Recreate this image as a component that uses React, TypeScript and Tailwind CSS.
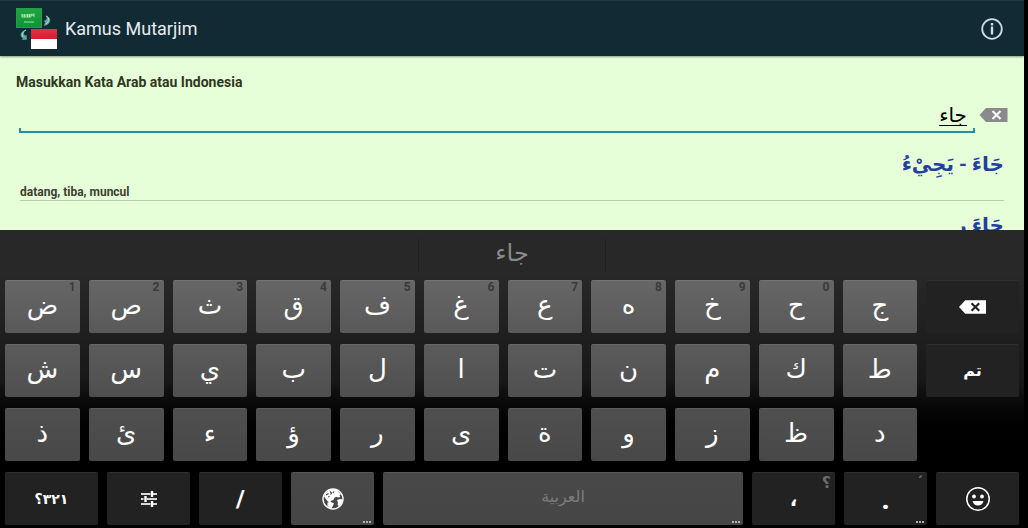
import { clsx } from "clsx";
import type { ReactNode } from "react";

const ROWS = [
  {
    tone: "border-[#727272] from-[#666666] to-[#595959]",
    keys: ["ض", "ص", "ث", "ق", "ف", "غ", "ع", "ه", "خ", "ح", "ج"],
    hints: ["1", "2", "3", "4", "5", "6", "7", "8", "9", "0"],
  },
  {
    tone: "border-[#676767] from-[#5b5b5b] to-[#4f4f4f]",
    keys: ["ش", "س", "ي", "ب", "ل", "ا", "ت", "ن", "م", "ك", "ط"],
    hints: [],
  },
  {
    tone: "border-[#5c5c5c] from-[#4f4f4f] to-[#484848]",
    keys: ["ذ", "ئ", "ء", "ؤ", "ر", "ى", "ة", "و", "ز", "ظ", "د"],
    hints: [],
  },
];

const DARK = "border-[#303030] from-[#222222] to-[#222222]";
const LIGHT = "border-[#585858] from-[#484848] to-[#464646]";

interface KeyProps {
  children: ReactNode;
  className: string;
  label?: string;
  hint?: string;
  hintClass?: string;
  more?: boolean;
}

function Key({
  children,
  className,
  label,
  hint,
  hintClass = "text-xs leading-3 font-bold text-[#3a3a3a]",
  more,
}: KeyProps) {
  return (
    <button
      type="button"
      aria-label={label}
      className={clsx(
        "relative flex h-[53px] min-w-0 items-center justify-center rounded-xs border-t bg-linear-to-b text-white",
        className,
      )}
    >
      {children}
      {hint && <span className={clsx("absolute top-0 right-1", hintClass)}>{hint}</span>}
      {more && (
        <span className="absolute right-[3px] bottom-[2px] flex gap-px">
          <i className="h-[2px] w-[2px] bg-[#b0b0b0]" />
          <i className="h-[2px] w-[2px] bg-[#b0b0b0]" />
          <i className="h-[2px] w-[2px] bg-[#b0b0b0]" />
        </span>
      )}
    </button>
  );
}

function AppLogo() {
  return (
    <svg viewBox="0 0 42 42" className="h-[42px] w-[42px]" aria-hidden="true">
      <defs>
        <linearGradient id="green" x1="0" y1="0" x2="0" y2="1">
          <stop offset="0" stopColor="#1fa542" />
          <stop offset="1" stopColor="#0d9433" />
        </linearGradient>
        <linearGradient id="red" x1="0" y1="0" x2="0" y2="1">
          <stop offset="0" stopColor="#dc3444" />
          <stop offset="1" stopColor="#d61e30" />
        </linearGradient>
      </defs>
      <rect x="0.5" y="0.5" width="25" height="19" fill="url(#green)" stroke="#2a9a48" />
      <path
        d="M6 6v3h2.500V6.500M8.500 9h3V6M11.500 9h2V6M13.500 9c2 0 2.500-1 2.500-3.500M18 5.500V9M6 7h12"
        fill="none"
        stroke="#b9e8b8"
        strokeWidth="1"
      />
      <path d="M8 14h10" stroke="#a5dca7" strokeWidth="1" />
      <path d="M30 8c5 1 6 6 1 9l-3 1 1-4-1.500-1c3-.5 4-2.500 2.500-5z" fill="#5fa897" />
      <path d="M30 8c3.500 1 3.500 5 0 8" fill="none" stroke="#b5ddcf" strokeWidth="1" />
      <path d="M10 22c-6 1-7 6-3 8.500l-1 1.500 5-.5-.5-4.500-1.500.5c-2-2-1.500-4.500 1-5.500z" fill="#5fa897" />
      <path d="M10 22c-4 2-4 5-3 7" fill="none" stroke="#b5ddcf" strokeWidth="1" />
      <rect x="15" y="21" width="26" height="20" fill="#fff" />
      <rect x="15" y="21" width="26" height="10" fill="url(#red)" />
    </svg>
  );
}

function BackspaceIcon({ body, cross }: { body: string; cross: string }) {
  return (
    <svg viewBox="0 0 28 14" className="h-[14px] w-full" aria-hidden="true">
      <path d="M0 7 6.500 0H28v14H6.500z" fill={body} />
      <path d="m13 3 8 8m0-8-8 8" stroke={cross} strokeWidth="2.200" />
    </svg>
  );
}

function TuneIcon() {
  return (
    <svg viewBox="0 0 18 18" className="h-[18px] w-[18px]" aria-hidden="true">
      <path
        d="M1 4h9.500M13 4h4M1 9h2.500M7 9h10M1 14h9.500M13 14h4"
        stroke="#d8d8d8"
        strokeWidth="1.800"
      />
      <path d="M12 1v6M5.500 6v6M12 11v6" stroke="#fff" strokeWidth="2.400" />
    </svg>
  );
}

function GlobeIcon() {
  return (
    <svg viewBox="0 0 22 22" className="h-[22px] w-[22px]" aria-hidden="true">
      <circle cx="11" cy="11" r="10" fill="none" stroke="#fff" strokeWidth="1.400" />
      <path
        d="M3.500 5.500 7 2l5-1 4 1.500-1 3 2 .5-2.500 3-2 .5-1 2.500-3 1 .5 2-2-.5L4.500 12 2 8.500z"
        fill="#fff"
      />
      <path d="m15 3 4 3-1.500 1.500 1 1.500-3 .5-1.500-2z" fill="#fff" />
      <path d="m5.500 14.500 3.500-.5 3 1.500-1 2-1.500 3-2-.5-2-2.500z" fill="#fff" />
      <path d="m15 12 3-1 2.500.5-1 4-2.500 3-1.500-2 .5-2z" fill="#fff" />
      <path
        d="m4 7 2.500-1.500M8 3.500l1.500 1.500-1 1.500M6 9l1.500-.5M12 3.500l-1 1.500"
        stroke="#484848"
        strokeWidth="1.100"
        fill="none"
      />
    </svg>
  );
}

function SmileIcon() {
  return (
    <svg viewBox="0 0 24 24" className="h-6 w-6" aria-hidden="true">
      <circle cx="12" cy="12" r="11.200" fill="none" stroke="#fff" strokeWidth="1.500" />
      <circle cx="8" cy="9.500" r="1.900" fill="#fff" />
      <circle cx="16" cy="9.500" r="1.900" fill="#fff" />
      <path d="M6.500 14h11c-1.200 6-9.800 6-11 0z" fill="#fff" />
    </svg>
  );
}

function Header() {
  return (
    <header className="relative z-10 flex h-14 shrink-0 items-center border-t border-[#1d3944] bg-[#112a34] px-4 shadow-[0_1px_2px_#00000066]">
      <AppLogo />
      <h1 className="ml-[7px] text-lg text-[#e6edf0]">Kamus Mutarjim</h1>
      <button type="button" aria-label="Info" className="mr-[5px] ml-auto">
        <svg viewBox="0 0 22 22" className="h-[22px] w-[22px]" aria-hidden="true">
          <circle cx="11" cy="11" r="9.800" fill="none" stroke="#cfdde3" strokeWidth="1.800" />
          <path d="M11 8.500v8M11 5v2.500" stroke="#cfdde3" strokeWidth="2.400" />
        </svg>
      </button>
    </header>
  );
}

function Dictionary() {
  return (
    <main className="flex min-h-0 flex-1 flex-col overflow-hidden bg-[#e6ffd9] pt-4">
      <label htmlFor="word" className="px-4 text-sm leading-5 font-bold text-[#30361f]">
        Masukkan Kata Arab atau Indonesia
      </label>
      <div className="flex items-start pt-2 pr-4 pl-[19px]">
        <div className="min-w-0 flex-1">
          <input
            id="word"
            dir="rtl"
            defaultValue="جاء"
            className="block h-7 w-full bg-transparent px-2 pt-[2px] text-xl text-black underline decoration-1 underline-offset-3 outline-none"
          />
          <div className="h-[5px] border-x-2 border-b-2 border-[#2490a6]" />
        </div>
        <button type="button" aria-label="Hapus" className="mt-2 ml-1 w-[29px]">
          <BackspaceIcon body="#8a8a8a" cross="#f4f4f4" />
        </button>
      </div>
      <ul className="px-5 pt-[15px]">
        <li className="border-b border-[#b9cdb0]">
          <p dir="rtl" lang="ar" className="text-xl leading-8 font-bold text-[#243f9f]">
            جَاءَ - يَجِيْءُ
          </p>
          <p className="pt-1 text-xs leading-4 font-bold text-[#3c4030]">datang, tiba, muncul</p>
        </li>
        <li className="pt-2">
          <p dir="rtl" lang="ar" className="text-xl leading-8 font-bold text-[#243f9f]">
            جَاءَ ر
          </p>
        </li>
      </ul>
    </main>
  );
}

function Keyboard() {
  return (
    <section
      aria-label="Papan ketik"
      className="shrink-0 bg-linear-to-b from-[#282828] from-15% via-[#181818] via-50% to-black to-75% pb-[3px]"
    >
      <div className="flex h-[50px] justify-center py-2">
        <button
          type="button"
          className="w-[188px] border-x border-[#202020] pb-1 text-2xl leading-7 text-[#8a8a8a]"
        >
          جاء
        </button>
      </div>
      <div className="flex flex-col gap-[11px] px-[5px]">
        {ROWS.map((row, i) => (
          <div key={row.tone} className="flex gap-[9px]">
            {row.keys.map((key, j) => (
              <Key
                key={key}
                hint={row.hints[j]}
                className={clsx("flex-[75] pb-1 text-[26px] leading-8", row.tone)}
              >
                {key}
              </Key>
            ))}
            {i === 0 && (
              <Key label="Hapus" className={clsx("flex-[93]", DARK)}>
                <span className="w-[27px]">
                  <BackspaceIcon body="#ffffff" cross="#222222" />
                </span>
              </Key>
            )}
            {i === 1 && <Key className={clsx("flex-[93] text-base font-bold", DARK)}>تم</Key>}
            {i === 2 && <div className="flex-[93]" />}
          </div>
        ))}
        <div className="flex gap-[9px]">
          <Key className={clsx("flex-[93] text-sm font-bold", DARK)}>
            <bdi dir="rtl">٣٢١؟</bdi>
          </Key>
          <Key label="Setelan" className={clsx("flex-[83]", DARK)}>
            <TuneIcon />
          </Key>
          <Key className={clsx("flex-[83] text-2xl font-bold", DARK)}>/</Key>
          <Key label="Bahasa" more className={clsx("flex-[83]", LIGHT)}>
            <GlobeIcon />
          </Key>
          <Key more className={clsx("flex-[360] pb-1 text-base", LIGHT)}>
            <span className="text-[#7c7c7c]">العربية</span>
          </Key>
          <Key
            hint="؟"
            hintClass="text-base leading-5 text-[#6a6a6a]"
            className={clsx("flex-[83] text-xl font-bold", DARK)}
          >
            ،
          </Key>
          <Key
            hint="´"
            hintClass="text-base leading-5 text-[#6a6a6a]"
            more
            className={clsx("flex-[83] text-3xl font-bold", DARK)}
          >
            .
          </Key>
          <Key label="Emoji" className={clsx("flex-[83]", DARK)}>
            <SmileIcon />
          </Key>
        </div>
      </div>
    </section>
  );
}

export default function App() {
  return (
    <div className="h-screen bg-black pr-1 font-[Roboto,'DejaVu_Sans',sans-serif]">
      <div className="flex h-full flex-col">
        <Header />
        <Dictionary />
        <Keyboard />
      </div>
    </div>
  );
}
